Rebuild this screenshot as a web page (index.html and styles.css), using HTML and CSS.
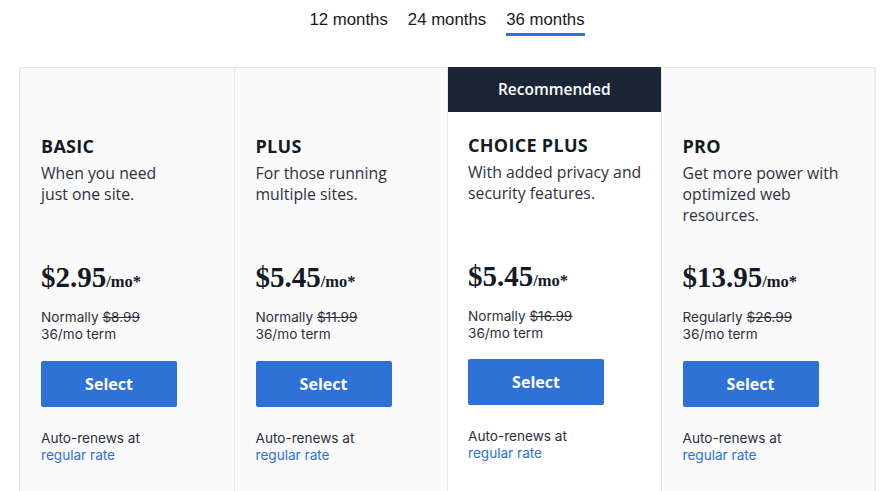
FILE: index.html
```html
<!DOCTYPE html>
<html lang="en">
<head>
<meta charset="utf-8">
<title>Plans</title>
<link rel="stylesheet" href="styles.css">
</head>
<body>
<div class="page">
  <nav class="tabs">
    <span class="tab">12 months</span>
    <span class="tab">24 months</span>
    <span class="tab active">36 months</span>
  </nav>
  <div class="plans">
    <div class="plan">
      <div class="ribbon blank"></div>
      <div class="body">
        <h2 class="name">BASIC</h2>
        <p class="desc">When you need<br>just one site.</p>
        <div class="price"><span class="amount">$2.95</span><span class="unit">/mo*</span></div>
        <p class="terms">Normally <s>$8.99</s><br>36/mo term</p>
        <button class="select">Select</button>
        <p class="renew">Auto-renews at<br><a class="link" href="#">regular rate</a></p>
      </div>
    </div>
    <div class="plan">
      <div class="ribbon blank"></div>
      <div class="body">
        <h2 class="name">PLUS</h2>
        <p class="desc">For those running<br>multiple sites.</p>
        <div class="price"><span class="amount">$5.45</span><span class="unit">/mo*</span></div>
        <p class="terms">Normally <s>$11.99</s><br>36/mo term</p>
        <button class="select">Select</button>
        <p class="renew">Auto-renews at<br><a class="link" href="#">regular rate</a></p>
      </div>
    </div>
    <div class="plan featured">
      <div class="ribbon">Recommended</div>
      <div class="body">
        <h2 class="name">CHOICE PLUS</h2>
        <p class="desc">With added privacy and<br>security features.</p>
        <div class="price"><span class="amount">$5.45</span><span class="unit">/mo*</span></div>
        <p class="terms">Normally <s>$16.99</s><br>36/mo term</p>
        <button class="select">Select</button>
        <p class="renew">Auto-renews at<br><a class="link" href="#">regular rate</a></p>
      </div>
    </div>
    <div class="plan">
      <div class="ribbon blank"></div>
      <div class="body">
        <h2 class="name">PRO</h2>
        <p class="desc">Get more power with<br>optimized web<br>resources.</p>
        <div class="price"><span class="amount">$13.95</span><span class="unit">/mo*</span></div>
        <p class="terms">Regularly <s>$26.99</s><br>36/mo term</p>
        <button class="select">Select</button>
        <p class="renew">Auto-renews at<br><a class="link" href="#">regular rate</a></p>
      </div>
    </div>
  </div>
</div>
</body>
</html>
```
FILE: styles.css
```css
* { box-sizing: border-box; }
html, body { margin: 0; padding: 0; background: #ffffff; }
body { font-family: "Open Sans", "Liberation Sans", sans-serif; color: #1d2330; overflow: hidden; }

.page { width: 886px; height: 491px; overflow: hidden; }

.tabs {
  display: flex;
  justify-content: center;
  gap: 20px;
  width: 856px;
  margin-left: 19px;
  padding-top: 10px;
  height: 67px;
  font-family: "Liberation Sans", Arial, sans-serif;
  font-size: 16.8px;
  color: #1a1a1a;
}
.tab { height: 26px; line-height: 19px; }
.tab.active { border-bottom: 3px solid #2e72d8; }

.plans {
  display: grid;
  grid-template-columns: repeat(4, 1fr);
  width: 857px;
  margin-left: 19px;
  border: 1px solid #e6e6e6;
  border-right: 2px solid #ececec;
  border-bottom: none;
  background: #fafafa;
}
.plan { border-left: 1px solid #e8e8e8; height: 440px; }
.plan:first-child { border-left: none; }
.plan.featured { background: #ffffff; margin-top: -1px; }

.ribbon {
  height: 45px;
  background: #1c2536;
  color: #ffffff;
  font-size: 15.5px;
  font-weight: 600;
  text-align: center;
  line-height: 45px;
}
.ribbon.blank { background: transparent; height: 44px; }

.body { padding: 24px 0 0 21px; }
.featured .body { padding: 23px 0 0 20px; }

.name {
  margin: 0;
  font-size: 18px;
  letter-spacing: 0.3px;
  font-weight: 700;
  line-height: 20px;
  color: #141a26;
}
.desc {
  margin: 7px 0 0;
  font-size: 15.8px;
  line-height: 21px;
  color: #2c3240;
  height: 63px;
}
.price {
  margin-top: 33px;
  height: 36px;
  line-height: 36px;
  font-family: "Liberation Serif", "Times New Roman", serif;
  font-weight: 700;
  color: #141a26;
}
.amount { font-size: 29px; }
.unit { font-size: 16.5px; }

.terms, .renew {
  font-family: "Inter", "Open Sans", sans-serif;
  font-size: 13.6px;
  line-height: 17px;
  color: #2a303c;
}
.terms { margin: 14px 0 0; }
.terms s { color: #2a303c; }

.select {
  display: block;
  margin-top: 18px;
  width: 136px;
  height: 46px;
  border: none;
  border-radius: 2px;
  background: #2e72d8;
  color: #ffffff;
  font-family: "Open Sans", "Liberation Sans", sans-serif;
  font-size: 16px;
  font-weight: 700;
  cursor: pointer;
}
.featured .select { margin-top: 17px; }

.renew { margin: 23px 0 0; }
.link { color: #2e72d8; text-decoration: none; }
```
